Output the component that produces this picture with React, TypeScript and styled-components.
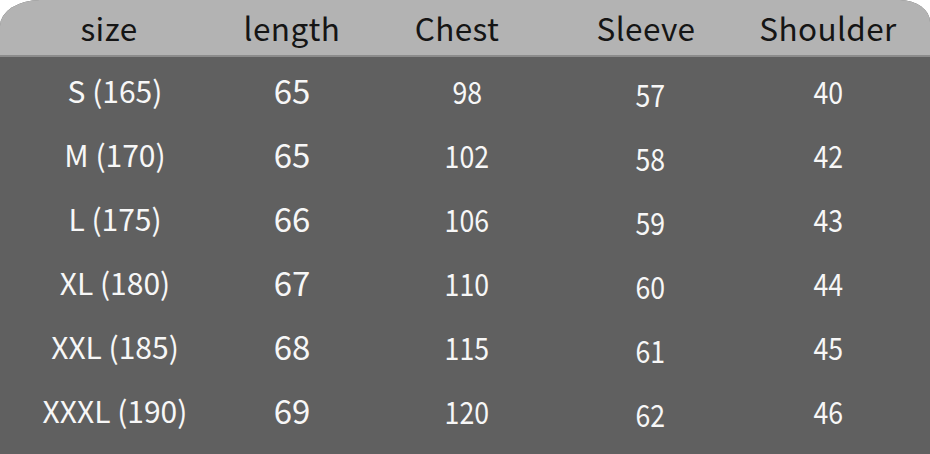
import React from "react";
import styled, { createGlobalStyle } from "styled-components";

const Global = createGlobalStyle`
  html, body { margin: 0; padding: 0; background: #ffffff; }
  body { width: 930px; height: 454px; overflow: hidden; }
`;

const Table = styled.div`
  width: 930px;
  height: 454px;
  display: flex;
  flex-direction: column;
  font-family: "Noto Sans CJK SC", "Noto Sans", sans-serif;
  background: #606060;
  border-top-left-radius: 40px 26px;
  border-top-right-radius: 30px 22px;
  overflow: hidden;
`;

const cols = "218px 148px 192px 184px 172px";

const HeaderRow = styled.div`
  display: grid;
  grid-template-columns: ${cols};
  height: 57px;
  align-items: center;
  background: #b3b3b3;
  border-bottom: 2px solid #8c8c8c;
  box-sizing: border-box;
`;

const HeaderCell = styled.div<{ $shift?: number }>`
  justify-self: center;
  font-size: 31.5px;
  color: #151515;
  letter-spacing: 0.4px;
  line-height: 1;
  transform: translateX(${(p) => p.$shift ?? 0}px);
`;

const Body = styled.div`
  display: flex;
  flex-direction: column;
  padding-top: 1px;
`;

const Row = styled.div`
  display: grid;
  grid-template-columns: ${cols};
  height: 64px;
  align-items: center;
`;

const Cell = styled.div<{ $shift?: number; $down?: number; $narrow?: boolean; $size?: number }>`
  justify-self: center;
  color: #f7f7f7;
  font-size: ${(p) => p.$size ?? 31}px;
  line-height: 1;
  white-space: pre;
  transform: translate(${(p) => p.$shift ?? 0}px, ${(p) => p.$down ?? 0}px)
    scaleX(${(p) => (p.$narrow ? 0.86 : 1)});
`;

const rows = [
  ["S (165)", "65", "98", "57", "40"],
  ["M (170)", "65", "102", "58", "42"],
  ["L (175)", "66", "106", "59", "43"],
  ["XL (180)", "67", "110", "60", "44"],
  ["XXL (185)", "68", "115", "61", "45"],
  ["XXXL (190)", "69", "120", "62", "46"],
];

export default function App() {
  return (
    <>
      <Global />
      <Table>
        <HeaderRow>
          <HeaderCell>size</HeaderCell>
          <HeaderCell>length</HeaderCell>
          <HeaderCell $shift={-5}>Chest</HeaderCell>
          <HeaderCell $shift={-4}>Sleeve</HeaderCell>
          <HeaderCell>Shoulder</HeaderCell>
        </HeaderRow>
        <Body>
          {rows.map((r) => (
            <Row key={r[0]}>
              <Cell $shift={6} $size={30}>{r[0]}</Cell>
              <Cell $size={33}>{r[1]}</Cell>
              <Cell $narrow $shift={5}>{r[2]}</Cell>
              <Cell $narrow $down={3}>{r[3]}</Cell>
              <Cell $narrow>{r[4]}</Cell>
            </Row>
          ))}
        </Body>
      </Table>
    </>
  );
}
